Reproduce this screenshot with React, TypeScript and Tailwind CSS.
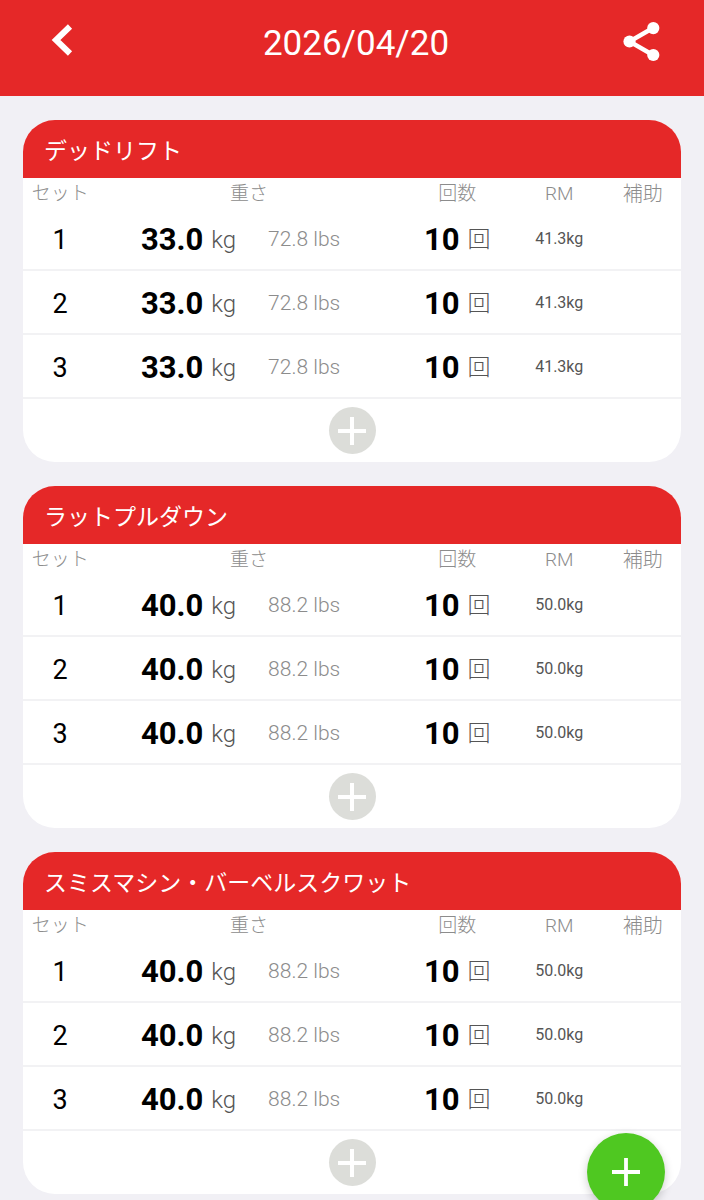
import React from "react";

type Exercise = { name: string; kg: string; lbs: string; rm: string };

const exercises: Exercise[] = [
  { name: "デッドリフト", kg: "33.0", lbs: "72.8", rm: "41.3kg" },
  { name: "ラットプルダウン", kg: "40.0", lbs: "88.2", rm: "50.0kg" },
  { name: "スミスマシン・バーベルスクワット", kg: "40.0", lbs: "88.2", rm: "50.0kg" },
];

function ExerciseCard({ exercise }: { exercise: Exercise }) {
  return (
    <section className="overflow-hidden rounded-[32px] bg-white">
      <h2 className="flex h-[58px] items-center bg-[#e52828] px-[21px] pt-1.5 text-[23px] leading-8 text-white">
        {exercise.name}
      </h2>
      <table className="w-full table-fixed border-collapse">
        <colgroup>
          <col className="w-[11.3%]" />
          <col className="w-[22%]" />
          <col className="w-[24.7%]" />
          <col className="w-[16%]" />
          <col className="w-[15%]" />
          <col className="w-[11%]" />
        </colgroup>
        <thead>
          <tr className="h-7 text-[19px] leading-6 text-[#8c8c8c]">
            <th className="p-0 pt-1 font-light whitespace-nowrap">セット</th>
            <th colSpan={2} className="p-0 pt-1 pr-1 font-light">重さ</th>
            <th className="p-0 pt-1 font-light">回数</th>
            <th className="p-0 pt-1 font-light">RM</th>
            <th className="p-0 pt-1 pr-1 text-xl leading-6 font-light">補助</th>
          </tr>
        </thead>
        <tbody>
          {[1, 2, 3].map((n) => (
            <tr key={n} className="h-16 border-b-2 border-[#f2f2f4]">
              <td className="p-0 pt-1 text-center text-[27px] leading-8 text-black">{n}</td>
              <td className="p-0 pt-1">
                <div className="flex items-center justify-end gap-2 pr-1.5">
                  <span className="text-[31px] leading-10 font-bold text-black">{exercise.kg}</span>
                  <span className="text-2xl font-light text-[#555]">kg</span>
                </div>
              </td>
              <td className="p-0 pt-0.5 pl-[26px] text-[21px] leading-8 font-light text-[#8c8c8c]">
                {exercise.lbs} lbs
              </td>
              <td className="p-0 pt-1">
                <div className="flex items-center justify-center gap-2">
                  <span className="text-[31px] leading-10 font-bold text-black">10</span>
                  <span className="text-[23px] leading-8 font-light text-[#555]">回</span>
                </div>
              </td>
              <td className="p-0 pt-0.5 text-center text-base text-[#555]">{exercise.rm}</td>
              <td className="p-0" />
            </tr>
          ))}
        </tbody>
      </table>
      <div className="flex h-[63px] items-center justify-center">
        <button aria-label="セットを追加" className="flex size-[47px] items-center justify-center rounded-full bg-[#dcddd9]">
          <svg viewBox="0 0 28 28" className="size-7" stroke="white" strokeWidth="4">
            <path d="M14 0v28M0 14h28" />
          </svg>
        </button>
      </div>
    </section>
  );
}

export default function App() {
  return (
    <div className="min-h-screen bg-[#f1f0f5] font-['Roboto','Noto_Sans_CJK_JP',sans-serif]">
      <header className="flex h-24 items-center justify-between bg-[#e52828] px-10 pb-3 text-white">
        <button aria-label="戻る" className="flex size-11 items-center justify-center pb-1">
          <svg viewBox="0 0 24 32" className="h-8 w-6" fill="none" stroke="white" strokeWidth="6">
            <path d="M20 2.5L6 16L20 29.5" />
          </svg>
        </button>
        <h1 className="pt-1 pl-2 text-[35px] leading-10">2026/04/20</h1>
        <button aria-label="共有" className="flex size-11 items-center justify-center">
          <svg viewBox="0 0 38 40" className="h-10 w-[38px]" fill="white">
            <path d="M30 6L6.5 19.5L30 33" fill="none" stroke="white" strokeWidth="4.4" />
            <circle cx="30.3" cy="6.1" r="6.1" />
            <circle cx="6.5" cy="19.5" r="6.1" />
            <circle cx="30.3" cy="33" r="6.1" />
          </svg>
        </button>
      </header>
      <main className="flex flex-col gap-6 px-[23px] pt-6">
        {exercises.map((e) => (
          <ExerciseCard key={e.name} exercise={e} />
        ))}
      </main>
      <button aria-label="種目を追加" className="fixed right-[39px] -bottom-[11px] flex size-[78px] items-center justify-center rounded-full bg-[#4fc821] shadow-[0_3px_10px_rgba(0,0,0,0.2)]">
        <svg viewBox="0 0 28 28" className="size-7" stroke="white" strokeWidth="3.8">
          <path d="M14 0v28M0 14h28" />
        </svg>
      </button>
    </div>
  );
}
